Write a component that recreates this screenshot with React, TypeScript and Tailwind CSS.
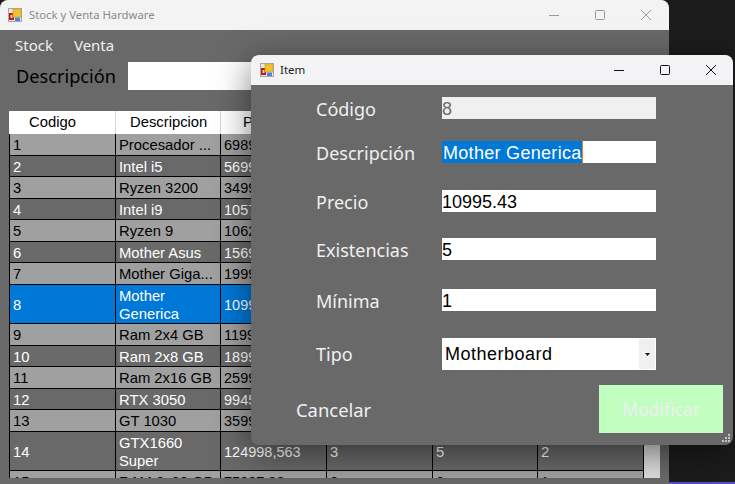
import React from 'react';

const SEGOE = 'font-["Noto_Sans",sans-serif]';
const ARIAL = 'font-["Liberation_Sans",sans-serif]';

type Row = { id: string; name: React.ReactNode; price: string; h: string; kind: 'odd' | 'even' | 'sel'; rest?: string[] };

const ROWS: Row[] = [
    { id: '1', name: 'Procesador ...', price: '6989', h: 'h-[22px]', kind: 'odd' },
    { id: '2', name: 'Intel i5', price: '5699', h: 'h-[21px]', kind: 'even' },
    { id: '3', name: 'Ryzen 3200', price: '3499', h: 'h-[22px]', kind: 'odd' },
    { id: '4', name: 'Intel i9', price: '1057', h: 'h-[21px]', kind: 'even' },
    { id: '5', name: 'Ryzen 9', price: '1062', h: 'h-[22px]', kind: 'odd' },
    { id: '6', name: 'Mother Asus', price: '1569', h: 'h-[21px]', kind: 'even' },
    { id: '7', name: 'Mother Giga...', price: '1999', h: 'h-[22px]', kind: 'odd' },
    { id: '8', name: 'Mother Generica', price: '1099', h: 'h-[39px]', kind: 'sel' },
    { id: '9', name: 'Ram 2x4 GB', price: '1199', h: 'h-[22px]', kind: 'odd' },
    { id: '10', name: 'Ram 2x8 GB', price: '1899', h: 'h-[21px]', kind: 'even' },
    { id: '11', name: 'Ram 2x16 GB', price: '2599', h: 'h-[22px]', kind: 'odd' },
    { id: '12', name: 'RTX 3050', price: '9945', h: 'h-[21px]', kind: 'even' },
    { id: '13', name: 'GT 1030', price: '3599', h: 'h-[22px]', kind: 'odd' },
    { id: '14', name: 'GTX1660 Super', price: '124998,563', h: 'h-[39px]', kind: 'even', rest: ['3', '5', '2'] },
    { id: '15', name: 'RAM 2x32 GB', price: '75997,83', h: 'h-[22px]', kind: 'odd', rest: ['2', '2', '1'] },
];

const KIND = {
    odd: 'bg-[#a0a0a0] text-black',
    even: 'bg-[#696969] text-white',
    sel: 'bg-[#0078d7] text-white',
};

const COLS = ['w-[107px]', 'w-[105px]', 'w-[106px]', 'w-[106px]', 'w-[105px]', 'w-[106px]'];

const AppIcon = () => (
    <svg width="14" height="14" viewBox="0 0 14 14" className="shrink-0">
        <rect x="0.5" y="0.5" width="13" height="13" fill="#e4e4e4" stroke="#a8a8a8" />
        <rect x="1" y="5" width="5" height="7" fill="#c01a12" />
        <rect x="2.5" y="7" width="2" height="3" fill="#f4d0c0" />
        <rect x="5" y="1" width="8" height="8" fill="#f2c22e" stroke="#c79a1a" strokeWidth="0.6" />
        <rect x="7" y="9.5" width="5" height="3.5" fill="#4a86e0" />
    </svg>
);

const WinControls = ({ color, gap }: { color: string; gap: string }) => (
    <div className={`flex items-center ${gap}`}>
        <svg width="12" height="12" viewBox="0 0 12 12" fill="none" stroke={color} strokeWidth="1">
            <path d="M1 6.5h10" />
        </svg>
        <svg width="12" height="12" viewBox="0 0 12 12" fill="none" stroke={color} strokeWidth="1">
            <rect x="1.5" y="1.5" width="9" height="9" rx="1" />
        </svg>
        <svg width="12" height="12" viewBox="0 0 12 12" fill="none" stroke={color} strokeWidth="1">
            <path d="M1 1l10 10M11 1L1 11" />
        </svg>
    </div>
);

const Grip = () => (
    <svg width="9" height="9" viewBox="0 0 9 9" fill="#c4c4c4" className="absolute right-[2px] bottom-[2px]">
        <rect x="6" y="0" width="2" height="2" />
        <rect x="3" y="3" width="2" height="2" />
        <rect x="6" y="3" width="2" height="2" />
        <rect x="0" y="6" width="2" height="2" />
        <rect x="3" y="6" width="2" height="2" />
        <rect x="6" y="6" width="2" height="2" />
    </svg>
);

const FIELDS = [
    { label: 'Código', value: '8', mt: 'mt-[12px]', cls: 'bg-[#f0f0f0] text-[#6d6d6d]' },
    { label: 'Descripción', value: 'Mother Generica', mt: 'mt-[22px]', cls: 'bg-white text-white', selected: true },
    { label: 'Precio', value: '10995.43', mt: 'mt-[27px]', cls: 'bg-white text-black' },
    { label: 'Existencias', value: '5', mt: 'mt-[26px]', cls: 'bg-white text-black' },
    { label: 'Mínima', value: '1', mt: 'mt-[29px]', cls: 'bg-white text-black' },
];

const ItemDialog = () => (
    <div className="absolute left-[251px] top-[55px] w-[482px] h-[390px] rounded-lg overflow-hidden bg-[#696969] flex flex-col">
        <div className="h-[30px] shrink-0 bg-[#f3f3f5] flex items-center pl-[9px] pr-[16px]">
            <AppIcon />
            <span className={`ml-[6px] text-[11.5px] text-[#222] ${SEGOE}`}>Item</span>
            <div className="ml-auto">
                <WinControls color="#111" gap="gap-[34px]" />
            </div>
        </div>
        {FIELDS.map(f => (
            <div key={f.label} className={`flex items-center h-[22px] pl-[65px] ${f.mt}`}>
                <span className={`w-[126px] pt-[2px] text-[18px] text-[#f0f0f0] ${SEGOE}`}>{f.label}</span>
                <div className={`w-[214px] h-[22px] leading-[24px] text-[18px] overflow-hidden ${ARIAL} ${f.cls}`}>
                    {f.selected ? <span className="inline-block h-[22px] pl-[1px] tracking-[0.3px] bg-[#0078d7] border-r border-[#f08020]">{f.value}</span> : f.value}
                </div>
            </div>
        ))}
        <div className="flex items-center h-[32px] pl-[65px] mt-[27px]">
            <span className={`w-[126px] text-[18px] text-[#f0f0f0] ${SEGOE}`}>Tipo</span>
            <div className={`w-[214px] h-[32px] bg-white flex items-center pl-[3px] pr-[1px] text-[18px] text-black ${ARIAL}`}>
                <span className="tracking-[0.5px]">Motherboard</span>
                <div className="ml-auto w-[16px] h-[30px] bg-[#f0f0f0] flex items-center justify-center">
                    <svg width="5" height="3" viewBox="0 0 5 3" fill="#111"><path d="M0 0h5L2.5 3z" /></svg>
                </div>
            </div>
        </div>
        <div className="flex items-start mt-[15px] pl-[45px]">
            <span className={`mt-[11px] text-[18.4px] text-[#f0f0f0] ${SEGOE}`}>Cancelar</span>
            <div className={`ml-auto mr-[10px] w-[124px] h-[48px] bg-[#c0ffc0] flex items-center justify-center text-[17.5px] text-[#eeeeee] ${SEGOE}`}>
                Modificar
            </div>
        </div>
        <Grip />
    </div>
);

const Table = () => (
    <div className={`ml-[9px] mt-[21px] h-[367px] w-[651px] overflow-hidden flex items-stretch ${ARIAL} text-[14.8px]`}>
        <div className="w-[635px] shrink-0">
            <div className="flex h-[23px] bg-white text-black leading-[23px]">
                <div className="w-[107px] pl-[20px] border-r border-[#d8d8d8]">Codigo</div>
                <div className="w-[105px] pl-[14px] border-r border-[#d8d8d8]">Descripcion</div>
                <div className="w-[106px] pl-[22px]">Precio</div>
            </div>
            {ROWS.map(r => {
                const cells = [r.id, r.name, r.price, ...(r.rest ?? ['', '', ''])];
                return (
                    <div key={r.id} className={`flex border-b border-black ${r.h} ${KIND[r.kind]}`}>
                        {cells.map((c, i) => (
                            <div key={i} className={`${COLS[i]} h-full shrink-0 flex items-center leading-[18px] pl-[3px] pt-[1px] border-r border-black ${i === 0 ? 'border-l' : ''}`}>
                                <span className={i === 2 ? 'whitespace-nowrap text-[14.5px]' : ''}>{c}</span>
                            </div>
                        ))}
                    </div>
                );
            })}
        </div>
        <div className="w-[16px] bg-[#dcdcdc]" />
    </div>
);

export default function App() {
    return (
        <div className="relative w-[735px] h-[484px] overflow-hidden bg-[#1c1c1c]">
            <div className="absolute left-[669px] right-0 bottom-0 h-[2px] bg-[#5b4fc7]" />
            <div className="relative w-[669px] h-[484px] bg-[#696969] rounded-t-lg overflow-hidden flex flex-col">
                <div className="h-[30px] shrink-0 bg-[#f3f3f3] flex items-center pl-[8px] pr-[17px]">
                    <AppIcon />
                    <span className={`ml-[7px] text-[11.3px] text-[#8a8a8a] ${SEGOE}`}>Stock y Venta Hardware</span>
                    <div className="ml-auto">
                        <WinControls color="#9a9a9a" gap="gap-[34px]" />
                    </div>
                </div>
                <div className={`flex gap-[21px] pl-[15px] pt-[2px] h-[29px] items-center text-[15px] text-[#f0f0f0] ${SEGOE}`}>
                    <span>Stock</span>
                    <span>Venta</span>
                </div>
                <div className="flex items-center h-[28px] mt-[3px] pl-[16px]">
                    <span className={`w-[112px] pt-[2px] text-[18.2px] text-black ${SEGOE}`}>Descripción</span>
                    <div className="w-[300px] h-[28px] bg-white" />
                </div>
                <Table />
            </div>
            <div className="absolute left-[251px] top-[55px] w-[482px] h-[390px] rounded-lg shadow-[0_8px_34px_rgba(0,0,0,0.5)]" />
            <ItemDialog />
        </div>
    );
}
